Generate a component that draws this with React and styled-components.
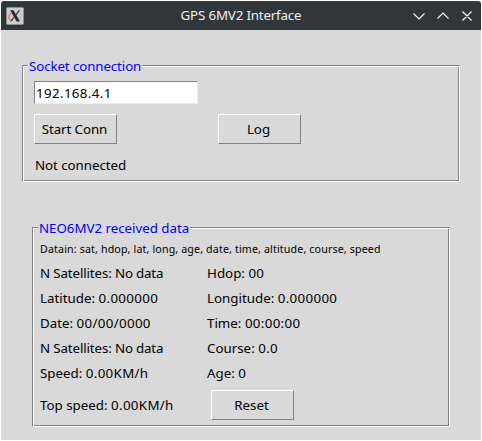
import React from "react";
import styled, { createGlobalStyle } from "styled-components";

const GlobalStyle = createGlobalStyle`
  html, body { margin: 0; padding: 0; background: #fff; overflow: hidden; }
  *, *::before, *::after { box-sizing: border-box; }
`;

const Window = styled.div`
  width: 482px;
  height: 441px;
  padding: 1px;
  display: flex;
  flex-direction: column;
  font-family: "Noto Sans", sans-serif;
  font-size: 13.33px;
  line-height: 18px;
  color: #000;
  white-space: nowrap;
`;

const TitleBar = styled.header`
  flex: none;
  height: 29px;
  display: grid;
  grid-template-columns: 80px 1fr 80px;
  align-items: center;
  background: #31363b;
  border-top: 1px solid #3b4045;
  border-radius: 3px 3px 0 0;
  color: #eff0f1;
`;

const AppIcon = styled.svg`
  display: block;
  margin-left: 5px;
`;

const Title = styled.div`
  text-align: center;
  letter-spacing: -0.17px;
  padding-bottom: 2px;
`;

const WindowControls = styled.svg`
  display: block;
  fill: none;
  stroke: #fcfcfc;
  stroke-width: 1.1;
`;

const Content = styled.main`
  flex: 1;
  background: #d9d9d9;
  padding: 35px 0 0 21px;
  display: flex;
  flex-direction: column;
  gap: 45px;
`;

const Group = styled.section`
  width: ${(p) => p.$width}px;
  height: ${(p) => p.$height}px;
  margin-left: ${(p) => p.$indent || 0}px;
  border: 1px solid;
  border-color: #828282 #fff #fff #828282;
  box-shadow: inset 1px 1px 0 #fff, inset -1px -1px 0 #828282;
  display: flex;
  flex-direction: column;
  align-items: flex-start;
`;

const Legend = styled.h2`
  flex: none;
  height: 18px;
  margin: -9px 0 0 5px;
  padding: 0 1px;
  font-size: inherit;
  font-weight: 400;
  line-height: 18px;
  letter-spacing: ${(p) => p.$tracking}px;
  background: #d9d9d9;
  color: #00f;
`;

const Entry = styled.input`
  width: 164px;
  height: 23px;
  margin: 6px 0 0 11px;
  padding: 1px 0 0 1px;
  border: 1px solid;
  border-color: #828282 #ececec #ececec #828282;
  border-radius: 0;
  outline: none;
  background: #fff;
  font: inherit;
  letter-spacing: 0.36px;
  color: #000;
`;

const ButtonRow = styled.div`
  display: flex;
  gap: 101px;
  margin: 10px 0 0 11px;
`;

const Button = styled.button`
  width: 83px;
  height: 30px;
  padding: 0 2px 0 0;
  border: 1px solid;
  border-color: #fff #828282 #828282 #fff;
  border-radius: 0;
  background: #d9d9d9;
  font: inherit;
  letter-spacing: ${(p) => p.$tracking || 0}px;
  color: #000;
`;

const Status = styled.div`
  margin: 12px 0 0 12px;
  letter-spacing: -0.06px;
`;

const Format = styled.div`
  margin: 3px 0 0 7px;
  font-size: 10.67px;
  line-height: 18px;
  letter-spacing: 0.14px;
`;

const Readings = styled.div`
  display: grid;
  grid-template-columns: 167px auto;
  grid-auto-rows: 25px;
  align-items: center;
  margin: 2px 0 0 7px;
`;

const Label = styled.span`
  letter-spacing: ${(p) => (p.$numeric ? 0 : -0.13)}px;
`;

const Value = styled.span`
  letter-spacing: ${(p) => (p.$numeric ? 0.33 : -0.2)}px;
`;

const Footer = styled.div`
  display: grid;
  grid-template-columns: 171px auto;
  align-items: center;
  margin: 5px 0 0 7px;
`;

const readings = [
  ["N Satellites", "No data"], ["Hdop", "00"],
  ["Latitude", "0.000000"], ["Longitude", "0.000000"],
  ["Date", "00/00/0000"], ["Time", "00:00:00"],
  ["N Satellites", "No data"], ["Course", "0.0"],
  ["Speed", "0.00KM/h"], ["Age", "0"],
];

function Reading({ label, value }) {
  const numeric = /^\d/.test(value);
  return (
    <div>
      <Label $numeric={numeric}>{label}: </Label>
      <Value $numeric={numeric}>{value}</Value>
    </div>
  );
}

export default function App() {
  return (
    <Window>
      <GlobalStyle />
      <TitleBar>
        <AppIcon width="18" height="18" viewBox="0 0 18 18">
          <rect x="0.5" y="0.5" width="17" height="17" rx="1" fill="#c9cdd0" stroke="#899197" />
          <path d="M14.6 6.4c2.2 2.4-.5 5.6-4.2 6.6" fill="none" stroke="#e9b89a" strokeWidth="1.2" />
          <path d="M8.6 5.3C4.500 5.800 2 8.700 3 11.200c.6 1.400 2.400 2 4.600 1.900" fill="none" stroke="#e58055" strokeWidth="1.4" />
          <path d="M4.200 3.200h3.300l6.500 11.300h-3.300z" fill="#25292c" />
          <path d="M13.500 3.200 9.800 8.200M8.200 10.200 4.600 14.500" stroke="#34393c" strokeWidth="1.1" />
        </AppIcon>
        <Title>GPS 6MV2 Interface</Title>
        <WindowControls width="80" height="18" viewBox="0 0 80 18">
          <path d="M12.500 6.500l5.500 5.500 5.500-5.500M36.500 11.500l5.500-5.500 5.500 5.500M61.500 4.500l9 9M70.500 4.500l-9 9" />
        </WindowControls>
      </TitleBar>
      <Content>
        <Group $width={438} $height={117}>
          <Legend $tracking={-0.11}>Socket connection</Legend>
          <Entry defaultValue="192.168.4.1" />
          <ButtonRow>
            <Button $tracking={-0.1}>Start Conn</Button>
            <Button>Log</Button>
          </ButtonRow>
          <Status>Not connected</Status>
        </Group>
        <Group $width={418} $height={200} $indent={10}>
          <Legend $tracking={-0.03}>NEO6MV2 received data</Legend>
          <Format>Datain: sat, hdop, lat, long, age, date, time, altitude, course, speed</Format>
          <Readings>
            {readings.map(([label, value], i) => (
              <Reading key={i} label={label} value={value} />
            ))}
          </Readings>
          <Footer>
            <Reading label="Top speed" value="0.00KM/h" />
            <Button>Reset</Button>
          </Footer>
        </Group>
      </Content>
    </Window>
  );
}
